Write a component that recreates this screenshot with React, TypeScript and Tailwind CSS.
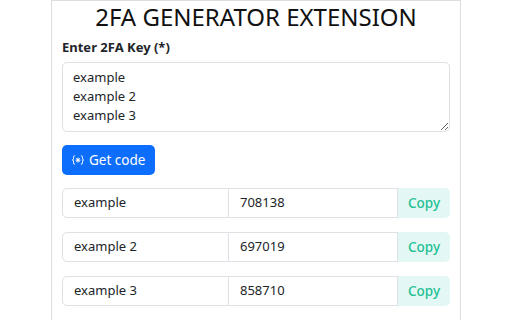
import { useState } from 'react'

const rows = [
  { name: 'example', code: '708138' },
  { name: 'example 2', code: '697019' },
  { name: 'example 3', code: '858710' },
]

function BracesAsterisk() {
  return (
    <svg viewBox="0 0 16 16" className="w-[12px] h-[12px]" fill="currentColor">
      <path d="M1.114 8.063V7.9c1.005-.102 1.497-.615 1.497-1.6V4.503c0-1.094.39-1.538 1.354-1.538h.273V2h-.376C2.25 2 1.49 2.759 1.49 4.352v1.524c0 1.094-.376 1.456-1.490 1.456v1.299c1.114 0 1.490.362 1.490 1.456v1.524c0 1.593.759 2.352 2.372 2.352h.376v-.964h-.273c-.964 0-1.354-.444-1.354-1.538V9.663c0-.984-.492-1.497-1.497-1.6M14.886 7.9v.164c-1.005.103-1.497.616-1.497 1.6v1.798c0 1.094-.39 1.538-1.354 1.538h-.273v.964h.376c1.613 0 2.372-.759 2.372-2.352v-1.524c0-1.094.376-1.456 1.490-1.456v-1.3c-1.114 0-1.490-.362-1.490-1.456V4.352C14.51 2.759 13.75 2 12.138 2h-.376v.964h.273c.964 0 1.354.444 1.354 1.538V6.3c0 .984.492 1.497 1.497 1.6M7.5 11.5V9.207l-1.621 1.621-.707-.707L6.792 8.5H4.5v-1h2.293L5.172 5.879l.707-.707L7.5 6.792V4.5h1v2.293l1.621-1.621.707.707L9.208 7.5H11.5v1H9.207l1.621 1.621-.707.707L8.5 9.208V11.5z" />
    </svg>
  )
}

export default function App() {
  const [keys, setKeys] = useState('example\nexample 2\nexample 3')

  return (
    <div className="w-[512px] h-[320px] bg-white overflow-hidden font-['Noto_Sans',sans-serif] text-[#212529]">
      <div className="ml-[51px] w-[410px] min-h-[330px] border border-b-0 border-[#dedede] px-[10px]">
        {/* Header */}
        <h2 className="text-[24px] leading-[32px] text-center font-normal mb-[5px] text-[#111]">
          2FA GENERATOR EXTENSION
        </h2>

        <label className="block text-[13px] leading-[19px] font-bold mb-[5px]">
          Enter 2FA Key (*)
        </label>
        <textarea
          rows={3}
          value={keys}
          onChange={(e) => setKeys(e.target.value)}
          className="block w-full h-[70px] border border-[#dee2e6] rounded-[5px] px-[10px] py-[5px] text-[13px] leading-[19.2px] outline-none"
        />

        <button className="mt-[13px] h-[30px] px-[10px] flex items-center gap-[5px] bg-[#0d6efd] text-white text-[13.5px] rounded-[5px]">
          <BracesAsterisk />
          Get code
        </button>

        {/* Results */}
        <div className="mt-[13px] flex flex-col gap-[14px]">
          {rows.map((row) => (
            <div key={row.name} className="flex h-[30px] text-[13px]">
              <div className="w-[167px] flex items-center px-[11px] border border-[#dee2e6] rounded-l-[5px]">
                {row.name}
              </div>
              <div className="w-[169px] flex items-center px-[11px] border border-l-0 border-[#dee2e6]">
                {row.code}
              </div>
              <button className="flex-1 bg-[#e3f8f4] text-[#1cc095] text-[13.5px] font-medium rounded-r-[5px]">
                Copy
              </button>
            </div>
          ))}
        </div>
      </div>
    </div>
  )
}
